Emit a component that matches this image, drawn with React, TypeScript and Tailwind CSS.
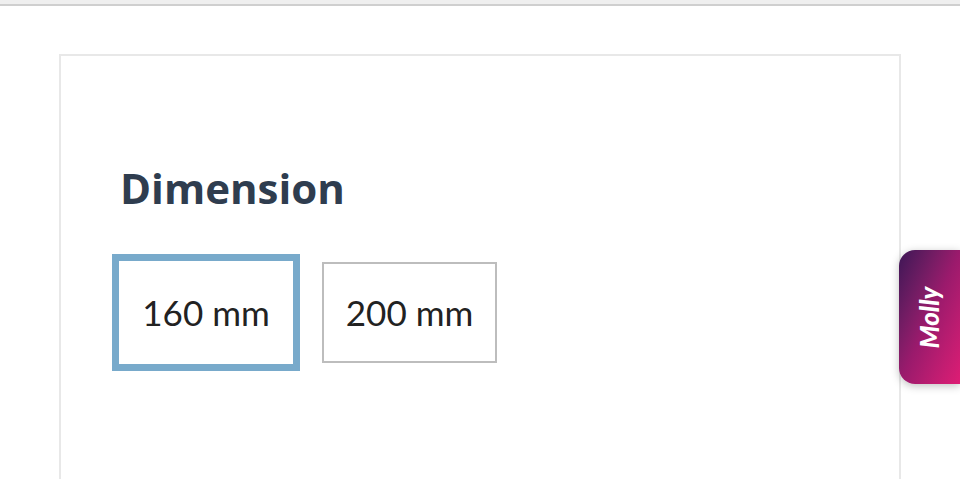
const SIZES = [
  { label: "160 mm", selected: true },
  { label: "200 mm", selected: false },
];

export default function App() {
  return (
    <div className="h-[479px] w-full overflow-hidden bg-white relative" style={{ fontFamily: "Lato, 'Liberation Sans', sans-serif" }}>
      <div className="h-[6px] bg-[#efefef] border-b-2 border-[#cfcfcf]" />
      <div className="mx-[59px] mt-[48px] h-[600px] border-2 border-[#e8e8e8] bg-white pl-[51px] pt-[111px]">
        <h2 className="ml-[8px] font-['Open_Sans',sans-serif] text-[42px] leading-none font-bold text-[#2f3d4f]">Dimension</h2>
        <div className="mt-[45px] flex items-center gap-[22px]">
          {SIZES.map((s) =>
            s.selected ? (
              <button
                key={s.label}
                className="flex h-[117px] w-[188px] items-center justify-center border-[7px] border-[#78aacb] bg-white text-[35px] text-[#222]"
              >
                {s.label}
              </button>
            ) : (
              <button
                key={s.label}
                className="flex h-[101px] w-[175px] items-center justify-center border-2 border-[#bdbdbd] bg-white text-[35px] text-[#222]"
              >
                {s.label}
              </button>
            )
          )}
        </div>
      </div>
      <div className="absolute right-0 top-[250px] flex h-[134px] w-[61px] items-center justify-center rounded-l-[16px] bg-gradient-to-br from-[#3e1556] via-[#9a1a6c] to-[#de1c74] shadow-[0_2px_8px_rgba(0,0,0,0.25)]">
        <span className="-rotate-90 whitespace-nowrap text-[26px] font-black italic text-white">Molly</span>
      </div>
    </div>
  );
}
